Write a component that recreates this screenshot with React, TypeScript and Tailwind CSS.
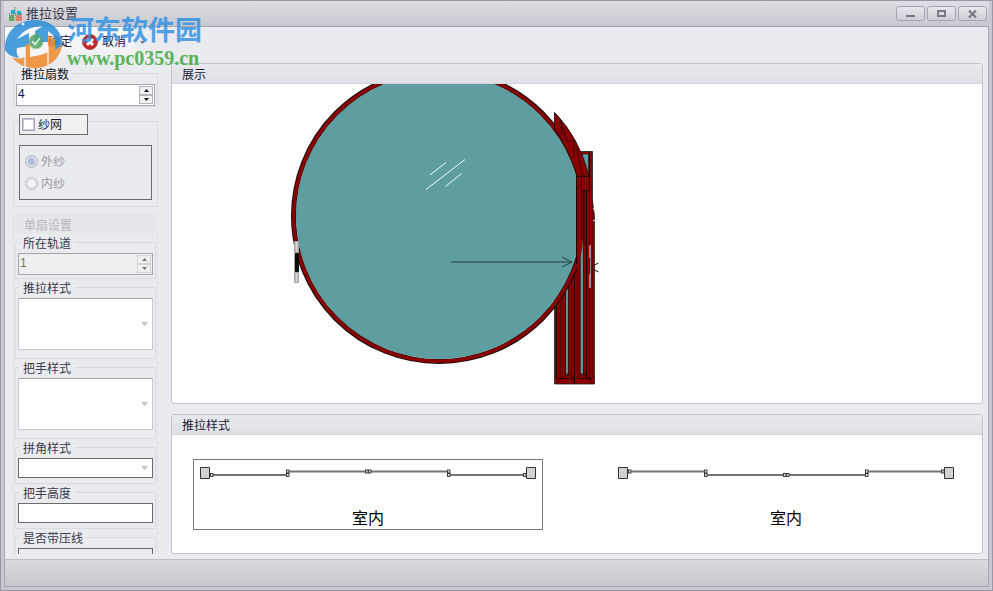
import { useState } from "react";
import type { ReactNode } from "react";

const Triangle = ({ up, className = "w-[5px]" }: { up?: boolean; className?: string }) => (
  <svg viewBox="0 0 5 3" fill="currentColor" className={className} aria-hidden="true">
    <path d={up ? "M0 3 2.5 0 5 3z" : "M0 0h5L2.5 3z"} />
  </svg>
);

function Group({ title, className = "", children }: { title: string; className?: string; children: ReactNode }) {
  return (
    <fieldset className={`min-w-0 border border-[#d9dade] ${className}`}>
      <legend className="ml-px h-4 px-1 leading-[20px]">{title}</legend>
      {children}
    </fieldset>
  );
}

interface SpinnerProps {
  label: string;
  value: number;
  onChange: (value: number) => void;
  disabled?: boolean;
}

function Spinner({ label, value, onChange, disabled }: SpinnerProps) {
  const stepClass =
    "flex w-[14px] flex-1 items-center justify-center border border-[#b4b4b8] bg-[#f0f0f0] disabled:border-[#d4d4d6] disabled:text-[#77777b]";

  return (
    <div className={`flex h-[22px] border border-[#a6a6aa] ${disabled ? "bg-[#efefef]" : "bg-white"}`}>
      <input
        type="text"
        aria-label={label}
        value={value}
        disabled={disabled}
        onChange={(e) => onChange(Number(e.target.value) || 0)}
        className="h-[18px] min-w-0 flex-1 bg-transparent pl-px text-[#101060] outline-none disabled:text-[#6f7a5a]"
      />
      <div className="flex flex-col p-px">
        <button type="button" aria-label={`${label} +`} disabled={disabled} className={stepClass} onClick={() => onChange(value + 1)}>
          <Triangle up />
        </button>
        <button type="button" aria-label={`${label} -`} disabled={disabled} className={stepClass} onClick={() => onChange(value - 1)}>
          <Triangle />
        </button>
      </div>
    </div>
  );
}

function Dropdown({ label, className }: { label: string; className: string }) {
  return (
    <div className="relative">
      <select aria-label={label} disabled className={`block w-full appearance-none border bg-white opacity-100 ${className}`} />
      <Triangle className="pointer-events-none absolute top-1/2 right-[5px] -mt-0.5 w-[7px] text-[#c6c6c8]" />
    </div>
  );
}

function Panel({ title, className = "", children }: { title: string; className?: string; children: ReactNode }) {
  return (
    <section className={`flex flex-col overflow-hidden rounded-[3px] border border-[#c3c4ce] bg-white ${className}`}>
      <h2 className="h-5 shrink-0 border-b border-[#d3d4da] bg-linear-to-b from-[#e8e9ed] to-[#dfe0e5] pl-[10px] leading-[22px] text-[#1c1c34]">
        {title}
      </h2>
      {children}
    </section>
  );
}

// Front view of the round door with the sliding sashes behind it
function DoorDrawing() {
  return (
    <svg viewBox="172 84 810 319" className="min-h-0 w-full flex-1" role="img" aria-label="展示">
      <clipPath id="door-edge">
        <path d="M172 60h405v343H172z" />
      </clipPath>

      {/* sash frames */}
      <path d="M580 151.500h12.500v50l2 14v168.500h-40V300l26-60z" fill="#8b0000" stroke="#222" strokeWidth=".8" />
      <path d="M582 154h6.500v20h-3z" fill="#5f9ea0" stroke="#111" strokeWidth=".6" />
      <path
        d="M556.500 300v78.500M574.500 250v134M586.500 190v188M589.500 151v227"
        stroke="#160000"
        fill="none"
        strokeWidth=".9"
      />
      <path
        d="M560.500 300v78M562.500 290v84M571.500 280v98M577.500 268v106M584.500 190v56M592.500 200v178"
        stroke="#4a0508"
        fill="none"
        strokeWidth=".7"
      />
      <path d="M565.600 284h2.800v91h-2.800zM580.200 240h3.200v135h-3.200z" fill="#5f9ea0" stroke="#260404" strokeWidth=".8" />
      <path
        d="M556 378.500h18M577 378.500h15M562 378l4-4h4l4 4M577 378l3-4h4l4 4M557 383l4-4M571 379l4 4M588 379l5 4"
        stroke="#160000"
        fill="none"
        strokeWidth=".8"
      />

      {/* glass and rim */}
      <g clipPath="url(#door-edge)">
        <circle cx="439" cy="216" r="143" fill="#5f9ea0" />
        <circle cx="439" cy="216" r="145.500" fill="none" stroke="#111" strokeWidth="5" />
        <circle cx="439" cy="216" r="145.300" fill="none" stroke="#8b0000" strokeWidth="3.400" />
      </g>
      <path d="M577 176h12v14h-6v50q-1 15-6 28z" fill="#8b0000" />
      <path d="M554.500 112.500Q579 137 589 176h-12Q569 150 554.500 128z" fill="#8b0000" stroke="#111" strokeWidth=".8" />
      <path
        d="m554.500 112.500 7 8v14M560 119l7 23 7-2v18M576 147l7 28M577 176.500h12M581 190.500h8M581.500 177v63M583.500 190v50"
        fill="none"
        stroke="#180000"
        strokeWidth=".7"
      />
      <path d="M576.500 176v88" stroke="#260404" />

      {/* reflection marks */}
      <path d="m430 175 16-12.500M426 189.500l39-30M445.500 186.500l16-13" stroke="#f4ffff" fill="none" />
      <path d="m593 209 2-1M593 221l2-1" stroke="#fff" />

      {/* opening arrows */}
      <path d="M451 262h121M562 257l10 5-10 5" stroke="#263f40" fill="none" />
      <path d="m598.500 263-9 4.500 9 4.500" stroke="#222" fill="none" />

      {/* handles */}
      <rect x="294" y="241" width="5" height="42" rx="1" fill="#a5a5a5" />
      <path d="M296.500 242v10M296.500 273v9" stroke="#d8d8d8" strokeWidth="2" />
      <rect x="295" y="253" width="4" height="19" rx="1" fill="#080808" />
      <path d="M590 245v43" stroke="#968a8c" strokeWidth="2" />
      <path d="M589.500 258v16" stroke="#222" />
    </svg>
  );
}

const sashStarts = [17, 93, 175, 254];
const sashEnds = [96, 175, 257, 333];

function TrackOption({ levels, checked, onSelect }: { levels: number[]; checked: boolean; onSelect: () => void }) {
  return (
    <button
      type="button"
      aria-pressed={checked}
      onClick={onSelect}
      className={`flex h-[71px] flex-1 flex-col items-center border ${checked ? "border-[#77777a]" : "border-transparent"}`}
    >
      <svg viewBox="1 0 348 46" className="h-[46px] w-full shrink-0" aria-hidden="true">
        <path d="M7.500 7.500h9v11h-9zM333.500 7.500h9v11h-9z" fill="#d2d2d2" stroke="#333" />
        {levels.map((y, i) => (
          <path key={i} d={`M${sashStarts[i]} ${y}H${sashEnds[i]}`} stroke="#747474" strokeWidth="2" />
        ))}
        {levels.map((y, i) => (
          <g key={i} fill="#ddd" stroke="#333" strokeWidth=".9">
            <rect x={sashStarts[i] + 0.5} y={y - 1.5} width="2.500" height="3" />
            <rect x={sashEnds[i] - 2.500} y={y - 1.5} width="2.500" height="3" />
          </g>
        ))}
      </svg>
      <span className="text-[16px] leading-[26px] text-black">室内</span>
    </button>
  );
}

function Watermark() {
  return (
    <div className="pointer-events-none absolute top-3 left-1 flex opacity-85">
      <svg width="60" height="58" viewBox="5 13 60 58" aria-hidden="true">
        <ellipse cx="34" cy="44" rx="26" ry="22" fill="#fff" opacity=".3" />
        <path
          d="M5 50C4 33 17 20 35 20c15 0 26 9 27 22l-1 8h-6V37l-7-6v11H35V31l8-5c-12 0-20 5-26 13l12-6v13l-12 2c-1 4 0 7 2 10-7-1-12-4-14-8z"
          fill="#2b8fd9"
        />
        <path d="M12 57c4 2 8 2 13 0V46l5-3v14c8-1 14-3 18-5V35l7 5v10c3-2 5-3 7-6-1 14-12 24-27 24-10 0-18-4-23-11z" fill="#f08b2c" />
        <path d="M25 47v20M48 46v19" stroke="#fff" strokeWidth="1.500" fill="none" opacity=".8" />
        <circle cx="36" cy="41" r="7" fill="#5ba967" opacity=".7" />
        <path d="m32 41 3 3 5-6" fill="none" stroke="#fff" strokeWidth="1.500" opacity=".8" />
        <circle cx="23" cy="24" r="1.500" fill="#fff" />
      </svg>
      <div className="ml-[2px]">
        <p className="font-['Noto_Sans_CJK_SC',sans-serif] text-[27px] leading-[32px] font-bold text-[#3593e4]">河东软件园</p>
        <p className="font-['Liberation_Serif',serif] text-[20px] leading-[26px] font-bold text-[#40ab3e]">www.pc0359.cn</p>
      </div>
    </div>
  );
}

const captionButton =
  "flex h-[15px] w-[29px] items-center justify-center rounded-[3px] border border-[#a5a5b1] bg-linear-to-b from-[#e7e7ec] to-[#cecfd6] text-[#777786]";

export default function App() {
  const [count, setCount] = useState(4);
  const [screen, setScreen] = useState(false);
  const [side, setSide] = useState("outer");
  const [option, setOption] = useState(0);

  return (
    <div className="relative flex h-screen flex-col border border-[#9797a5] bg-[#c8c8d1] px-[3px] pb-[3px] font-['Liberation_Sans','Noto_Sans_CJK_SC',sans-serif] text-[12px] text-[#3a3a4c]">
      <header className="flex h-[25px] shrink-0 items-center bg-linear-to-b from-[#dedee3] to-[#c8c8d0] pr-[2px] pl-1">
        <svg width="15" height="16" viewBox="0 0 15 16" aria-hidden="true">
          <path d="M1 6 7 1l7 5v8H1z" fill="#c7d1cc" />
          <path d="M3 4h4v4H3zM9 5h4v4H9z" fill="#16afd0" />
          <path d="M1 9h5v6H1z" fill="#62a95f" />
          <path d="M8 9h6v6H8z" fill="#dc8267" />
          <path d="M7 1v14M1 8h13" stroke="#777" strokeDasharray="1 1" />
        </svg>
        <h1 className="ml-[3px] flex-1 text-[13px] leading-4">推拉设置</h1>
        <div className="flex gap-[2px]">
          <button type="button" aria-label="最小化" className={captionButton}>
            <svg width="9" height="8" viewBox="0 0 9 8"><path d="M0 5h9v2H0z" fill="currentColor" /></svg>
          </button>
          <button type="button" aria-label="最大化" className={captionButton}>
            <svg width="9" height="7" viewBox="0 0 9 7"><path d="M1 1h7v5H1z" fill="none" stroke="currentColor" strokeWidth="2" /></svg>
          </button>
          <button type="button" aria-label="关闭" className={captionButton}>
            <svg width="9" height="8" viewBox="0 0 9 8"><path d="m1 .5 7 7M8 .5l-7 7" stroke="currentColor" strokeWidth="2.200" /></svg>
          </button>
        </div>
      </header>

      <main className="flex min-h-0 flex-1 flex-col border border-[#a5a5b3] bg-[#eaebef]">
        <div className="flex h-[30px] w-[145px] shrink-0 items-stretch rounded-[3px] bg-linear-to-b from-[#fdfdfe] to-[#f0f0f4] text-[#202038]">
          <button type="button" className="ml-[23px] flex items-center gap-1">
            <svg width="16" height="16" viewBox="0 0 16 16" aria-hidden="true">
              <circle cx="8" cy="8" r="7" fill="#5ba967" stroke="#9acb9d" />
              <path d="m4 8 3 3 5-6" fill="none" stroke="#fff" strokeWidth="2" />
            </svg>
            确定
          </button>
          <button type="button" className="ml-[10px] flex items-center gap-1">
            <svg width="16" height="16" viewBox="0 0 16 16" aria-hidden="true">
              <circle cx="8" cy="8" r="7.500" fill="#c4262b" stroke="#a9494c" />
              <path d="m5 5 6 6M11 5l-6 6" stroke="#fff" strokeWidth="3" />
            </svg>
            取消
          </button>
          <button type="button" aria-label="更多" className="ml-auto flex w-[15px] items-center justify-center bg-[#ecedf1] text-[#77777f]">
            <Triangle />
          </button>
        </div>

        <div className="flex min-h-0 flex-1 gap-[13px] pr-[5px] pb-[5px] pl-2">
          <aside className="mt-[8px] w-[145px] shrink-0 overflow-hidden">
            <Group title="推拉扇数" className="px-[2px] pt-[3px] text-[#101020]">
              <Spinner label="推拉扇数" value={count} onChange={setCount} />
            </Group>

            <div className="mt-[14px] border border-[#d9dade] px-[5px] pb-[6px]">
              <label className="-mt-2 flex h-[21px] w-[69px] items-center gap-[3px] border border-[#6b6b6e] bg-[#f0f0f0] pl-[2px] text-[#1c1c34]">
                <input
                  type="checkbox"
                  checked={screen}
                  onChange={(e) => setScreen(e.target.checked)}
                  className="size-[13px] appearance-none border-2 border-[#c9cbdb] bg-white outline outline-[#a4a5b3] -outline-offset-1 checked:bg-[#6d82c4]"
                />
                纱网
              </label>
              <div className="mt-[10px] flex h-[55px] flex-col justify-center gap-1 border border-[#6b6b6e] pl-[5px] text-[#9a9aa2]">
                {[
                  ["outer", "外纱"],
                  ["inner", "内纱"],
                ].map(([id, text]) => (
                  <label key={id} className="flex h-[18px] items-center gap-[3px]">
                    <input
                      type="radio"
                      name="side"
                      disabled={!screen}
                      checked={side === id}
                      onChange={() => setSide(id)}
                      className="size-[13px] appearance-none rounded-full border border-[#bdbec8] bg-[#f5f5f5] shadow-[inset_0_0_0_2px_#dedfe5] checked:bg-[#afbcdd]"
                    />
                    {text}
                  </label>
                ))}
              </div>
            </div>

            <section className="mt-[7px] rounded-t-[3px] border border-[#e0e1e5] px-px">
              <h2 className="h-[19px] bg-[#e6e7eb] pl-[9px] leading-[22px] text-[#b7b7bc]">单扇设置</h2>
              <Group title="所在轨道" className="px-[2px] py-[3px]">
                <Spinner label="所在轨道" value={1} onChange={() => {}} disabled />
              </Group>
              <Group title="推拉样式" className="px-[2px] pt-[3px] pb-2">
                <Dropdown label="推拉样式" className="h-[52px] border-[#c9cad4] border-t-[#a0a0ad]" />
              </Group>
              <Group title="把手样式" className="px-[2px] pt-[3px] pb-2">
                <Dropdown label="把手样式" className="h-[52px] border-[#c9cad4] border-t-[#a0a0ad]" />
              </Group>
              <Group title="拼角样式" className="px-[2px] pt-[3px] pb-[5px]">
                <Dropdown label="拼角样式" className="h-5 border-[#6b6b6e]" />
              </Group>
              <Group title="把手高度" className="px-[2px] pt-[3px] pb-[5px]">
                <input type="text" aria-label="把手高度" className="block h-5 w-full border border-[#6b6b6e] bg-white px-1 outline-none" />
              </Group>
              <Group title="是否带压线" className="px-[2px] pt-[3px] pb-[5px]">
                <select aria-label="是否带压线" disabled className="block h-5 w-full appearance-none border border-[#6b6b6e] opacity-100" />
              </Group>
            </section>
          </aside>

          <div className="mt-[6px] flex min-w-0 flex-1 flex-col gap-[10px]">
            <Panel title="展示" className="min-h-0 flex-1">
              <DoorDrawing />
            </Panel>
            <Panel title="推拉样式" className="h-[140px] shrink-0">
              <div className="flex gap-[68px] px-[21px] pt-6">
                <TrackOption levels={[15, 11.5, 11.5, 15]} checked={option === 0} onSelect={() => setOption(0)} />
                <TrackOption levels={[11.5, 15, 15, 11.5]} checked={option === 1} onSelect={() => setOption(1)} />
              </div>
            </Panel>
          </div>
        </div>

        <footer className="h-[27px] shrink-0 border-t border-[#bdbdc7] bg-linear-to-b from-[#dadbdf] to-[#c6c6cc]" />
      </main>

      <Watermark />
    </div>
  );
}
